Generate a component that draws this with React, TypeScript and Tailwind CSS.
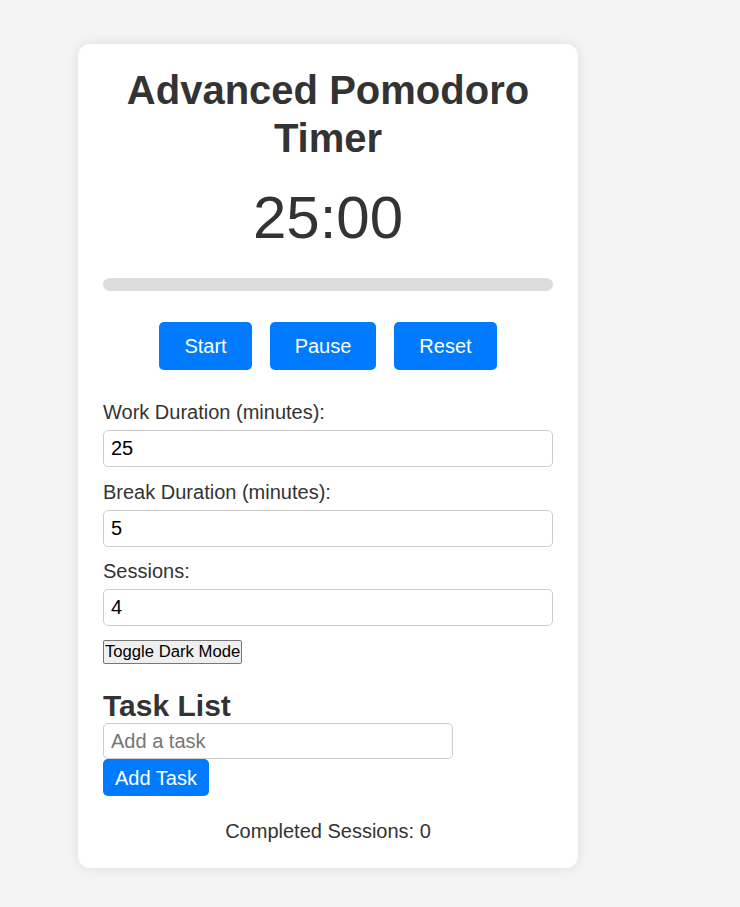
import { useState } from "react";

export default function App() {
    const [work, setWork] = useState("25");
    const [brk, setBrk] = useState("5");
    const [sessions, setSessions] = useState("4");
    const [task, setTask] = useState("");

    const inputClass =
        "block w-full h-[37px] border border-[#ccc] rounded-[5px] px-[7px] text-[20px] text-black bg-white outline-none";

    return (
        <div className="min-h-[907px] bg-[#f4f4f4] font-['Liberation_Sans',Arial,sans-serif] text-[#333]">
            <div className="pt-[44px] pl-[78px]">
                <div className="w-[500px] bg-white rounded-[12px] shadow-[0_0_12px_rgba(0,0,0,0.1)] px-[25px] pt-[22px] pb-[25px]">
                    <h1 className="text-center text-[40px] font-bold leading-[48px]">
                        Advanced Pomodoro Timer
                    </h1>

                    <div className="mt-[21px] text-center text-[60px] leading-[69px]">25:00</div>

                    <div className="mt-[26px] h-[13px] w-full rounded-full bg-[#ddd]" />

                    <div className="mt-[31px] flex justify-center gap-[18px]">
                        <button className="h-[48px] px-[25px] rounded-[5px] bg-[#007bff] text-white text-[20px]">Start</button>
                        <button className="h-[48px] px-[25px] rounded-[5px] bg-[#007bff] text-white text-[20px]">Pause</button>
                        <button className="h-[48px] px-[25px] rounded-[5px] bg-[#007bff] text-white text-[20px]">Reset</button>
                    </div>

                    <div className="mt-[31px]">
                        <label className="block text-[20px] leading-[23px]">Work Duration (minutes):</label>
                        <input
                            type="number"
                            value={work}
                            onChange={(e) => setWork(e.target.value)}
                            className={`mt-[6px] ${inputClass}`}
                        />
                        <label className="block mt-[14px] text-[20px] leading-[23px]">Break Duration (minutes):</label>
                        <input
                            type="number"
                            value={brk}
                            onChange={(e) => setBrk(e.target.value)}
                            className={`mt-[6px] ${inputClass}`}
                        />
                        <label className="block mt-[13px] text-[20px] leading-[23px]">Sessions:</label>
                        <input
                            type="number"
                            value={sessions}
                            onChange={(e) => setSessions(e.target.value)}
                            className={`mt-[6px] ${inputClass}`}
                        />
                    </div>

                    <button className="mt-[14px] h-[24px] px-[1px] border border-[#767676] rounded-[2px] bg-[#efefef] text-black text-[16.67px] leading-[20px]">
                        Toggle Dark Mode
                    </button>

                    <h2 className="mt-[25px] text-[30px] font-bold leading-[34px]">Task List</h2>
                    <input
                        type="text"
                        placeholder="Add a task"
                        value={task}
                        onChange={(e) => setTask(e.target.value)}
                        className="block w-[350px] h-[36px] border border-[#ccc] rounded-[5px] px-[7px] text-[20px] text-black placeholder:text-[#757575] outline-none"
                    />
                    <button className="block h-[37px] px-[12px] rounded-[5px] bg-[#007bff] text-white text-[20px]">
                        Add Task
                    </button>

                    <p className="mt-[24px] text-center text-[20px] leading-[23px]">Completed Sessions: 0</p>
                </div>
            </div>
        </div>
    );
}
